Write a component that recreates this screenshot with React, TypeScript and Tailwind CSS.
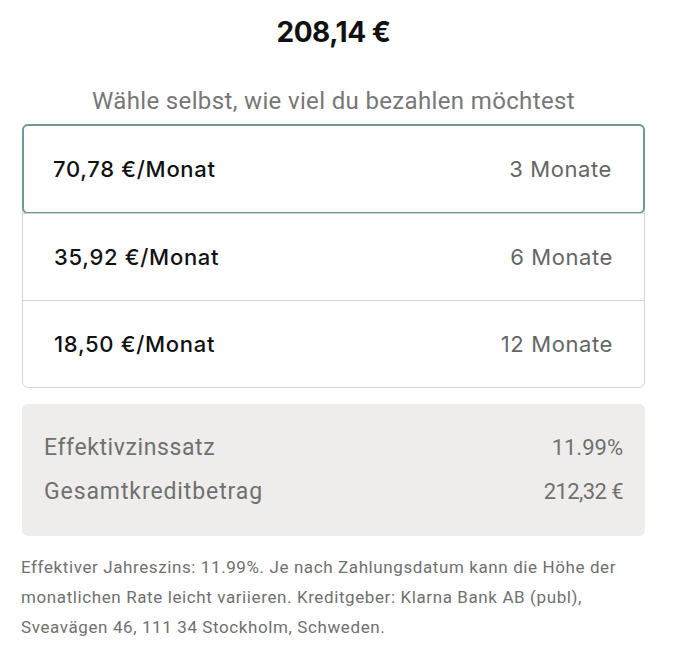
import React from "react";

const options = [
  { price: "70,78 €/Monat", months: "3 Monate", selected: true },
  { price: "35,92 €/Monat", months: "6 Monate", selected: false },
  { price: "18,50 €/Monat", months: "12 Monate", selected: false },
];

export default function App() {
  return (
    <div className="w-[700px] h-[651px] bg-white" style={{ fontFamily: "Roboto, sans-serif" }}>
      <div className="ml-[22px] w-[623px] flex flex-col">
        <div className="h-[64px] flex items-center justify-center">
          <span className="text-[28px] font-bold text-[#111] tracking-[-0.5px]" style={{ fontFamily: "Inter, sans-serif" }}>
            208,14 €
          </span>
        </div>
        <div className="h-[60px] pt-[22px] text-center text-[24px] leading-[30px] tracking-[0.35px] text-[#777]">
          Wähle selbst, wie viel du bezahlen möchtest
        </div>
        <div className="h-[264px] rounded-[6px] border border-[#d4d4d4] flex flex-col" style={{ fontFamily: "Inter, sans-serif" }}>
          {options.map((o, i) => (
            <div
              key={i}
              className={
                o.selected
                  ? "flex-1 flex items-center justify-between pl-[29px] pr-[31px] border-2 border-[#6e9995] rounded-[6px] -m-px"
                  : "flex-1 flex items-center justify-between pl-[31px] pr-[31px] border-t border-[#d4d4d4] first:border-t-0"
              }
            >
              <span className="text-[22px] tracking-[0.7px] font-medium text-[#111]">{o.price}</span>
              <span className="text-[22px] tracking-[0.6px] text-[#666]">{o.months}</span>
            </div>
          ))}
        </div>
        <div className="mt-[16px] h-[132px] rounded-[6px] bg-[#eeedeb] px-[22px] flex flex-col justify-center gap-[18px] text-[#707070]">
          <div className="flex justify-between items-center leading-[26px]">
            <span className="text-[23px] tracking-[0.6px]">Effektivzinssatz</span>
            <span className="text-[22px]">11.99%</span>
          </div>
          <div className="flex justify-between items-center leading-[26px]">
            <span className="text-[23px] tracking-[0.9px]">Gesamtkreditbetrag</span>
            <span className="text-[22px] tracking-[-0.6px]">212,32 €</span>
          </div>
        </div>
        <p className="mt-[16px] -ml-px text-[17px] leading-[30px] tracking-[0.6px] text-[#707070]">
          Effektiver Jahreszins: 11.99%. Je nach Zahlungsdatum kann die Höhe der monatlichen Rate leicht variieren. Kreditgeber: Klarna Bank AB (publ), Sveavägen 46, 111 34 Stockholm, Schweden.
        </p>
      </div>
    </div>
  );
}
